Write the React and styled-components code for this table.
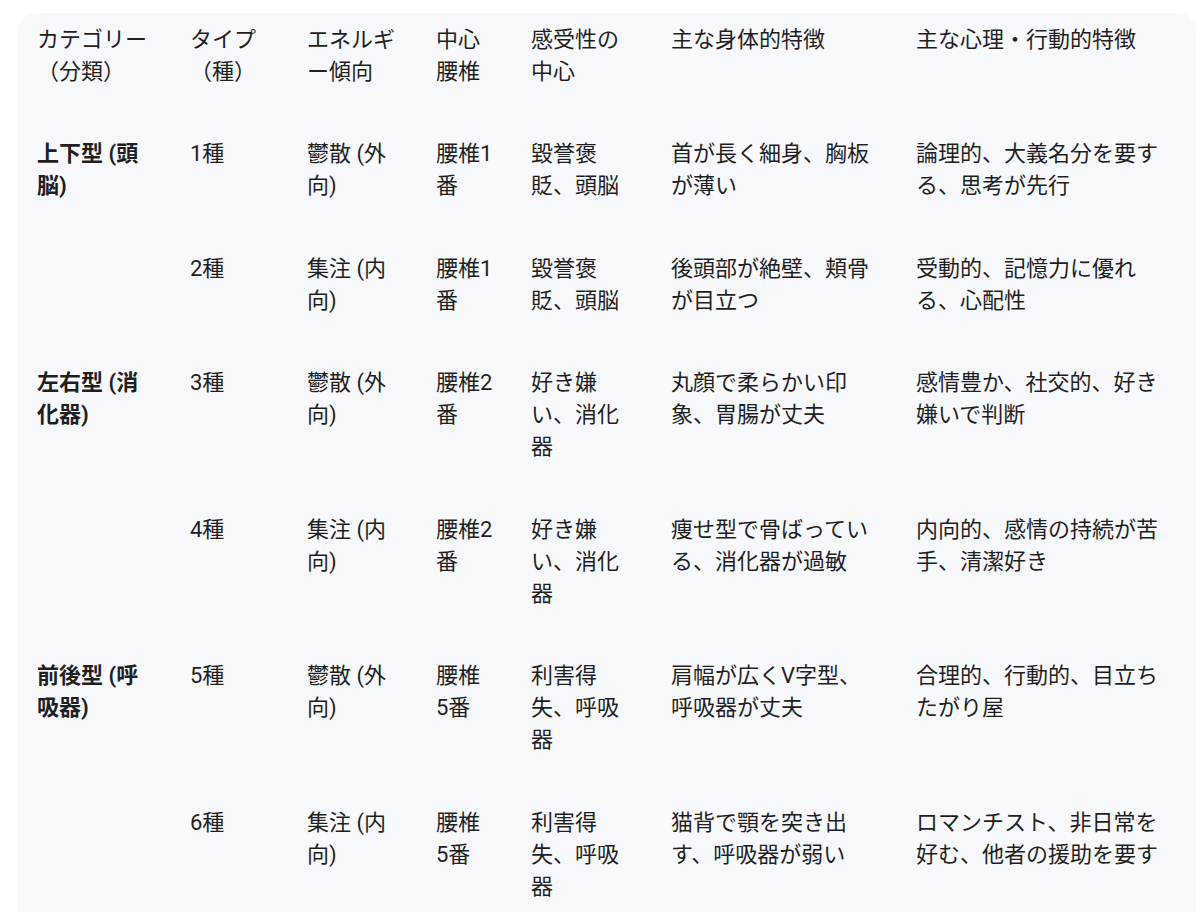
import React from "react";
import styled, { createGlobalStyle } from "styled-components";

const GlobalStyle = createGlobalStyle`
  html, body {
    margin: 0;
    padding: 0;
    background: #ffffff;
  }
  body {
    font-family: Roboto, "Noto Sans CJK JP", "Noto Sans", sans-serif;
    color: #1f1f1f;
    -webkit-font-smoothing: antialiased;
  }
`;

const Card = styled.div`
  margin: 13px 0 0 18px;
  width: 1178px;
  padding-left: 19px;
  box-sizing: border-box;
  background: #f8f9fc;
  border-radius: 18px;
  overflow: hidden;
`;

const Table = styled.table`
  width: 1159px;
  table-layout: fixed;
  border-collapse: collapse;
  font-size: 22px;
  line-height: 32px;
`;

const HeadCell = styled.th`
  text-align: left;
  vertical-align: top;
  font-weight: 400;
  padding: 11px 0 25px;
`;

const Cell = styled.td`
  text-align: left;
  vertical-align: top;
  font-weight: ${(p) => (p.$bold ? 700 : 400)};
  padding: 25px 0 25.5px;
`;

const Line = styled.span`
  display: block;
  white-space: nowrap;
`;

const widths = [153, 117, 129, 95, 140, 245, 280];

const header = [
  ["カテゴリー", "（分類）"],
  ["タイプ", "（種）"],
  ["エネルギ", "ー傾向"],
  ["中心", "腰椎"],
  ["感受性の", "中心"],
  ["主な身体的特徴"],
  ["主な心理・行動的特徴"],
];

const rows = [
  [
    ["上下型 (頭", "脳)"],
    ["1種"],
    ["鬱散 (外", "向)"],
    ["腰椎1", "番"],
    ["毀誉褒", "貶、頭脳"],
    ["首が長く細身、胸板", "が薄い"],
    ["論理的、大義名分を要す", "る、思考が先行"],
  ],
  [
    [],
    ["2種"],
    ["集注 (内", "向)"],
    ["腰椎1", "番"],
    ["毀誉褒", "貶、頭脳"],
    ["後頭部が絶壁、頬骨", "が目立つ"],
    ["受動的、記憶力に優れ", "る、心配性"],
  ],
  [
    ["左右型 (消", "化器)"],
    ["3種"],
    ["鬱散 (外", "向)"],
    ["腰椎2", "番"],
    ["好き嫌", "い、消化", "器"],
    ["丸顔で柔らかい印", "象、胃腸が丈夫"],
    ["感情豊か、社交的、好き", "嫌いで判断"],
  ],
  [
    [],
    ["4種"],
    ["集注 (内", "向)"],
    ["腰椎2", "番"],
    ["好き嫌", "い、消化", "器"],
    ["痩せ型で骨ばってい", "る、消化器が過敏"],
    ["内向的、感情の持続が苦", "手、清潔好き"],
  ],
  [
    ["前後型 (呼", "吸器)"],
    ["5種"],
    ["鬱散 (外", "向)"],
    ["腰椎", "5番"],
    ["利害得", "失、呼吸", "器"],
    ["肩幅が広くV字型、", "呼吸器が丈夫"],
    ["合理的、行動的、目立ち", "たがり屋"],
  ],
  [
    [],
    ["6種"],
    ["集注 (内", "向)"],
    ["腰椎", "5番"],
    ["利害得", "失、呼吸", "器"],
    ["猫背で顎を突き出", "す、呼吸器が弱い"],
    ["ロマンチスト、非日常を", "好む、他者の援助を要す"],
  ],
];

const Lines = ({ lines }) =>
  lines.map((t, i) => <Line key={i}>{t}</Line>);

export default function App() {
  return (
    <>
      <GlobalStyle />
      <Card>
        <Table>
          <colgroup>
            {widths.map((w, i) => (
              <col key={i} style={{ width: w }} />
            ))}
          </colgroup>
          <thead>
            <tr>
              {header.map((h, i) => (
                <HeadCell key={i}>
                  <Lines lines={h} />
                </HeadCell>
              ))}
            </tr>
          </thead>
          <tbody>
            {rows.map((r, ri) => (
              <tr key={ri}>
                {r.map((c, ci) => (
                  <Cell key={ci} $bold={ci === 0}>
                    <Lines lines={c} />
                  </Cell>
                ))}
              </tr>
            ))}
          </tbody>
        </Table>
      </Card>
    </>
  );
}
